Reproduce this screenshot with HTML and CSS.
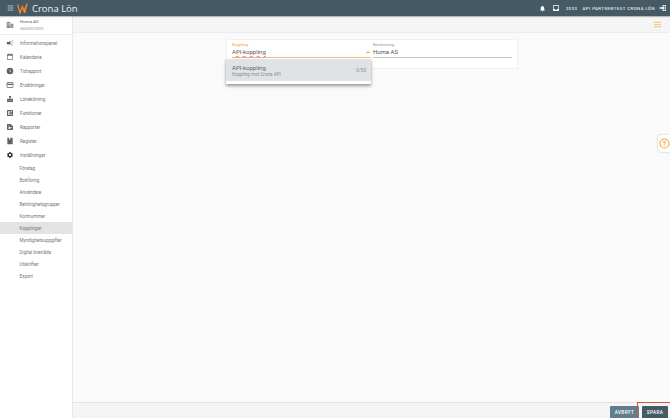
FILE: index.html
```html
<!DOCTYPE html>
<html lang="sv">
<head>
  <meta charset="UTF-8" />
  <title>Crona Lön</title>
  <link rel="stylesheet" href="styles.css">
</head>
<body>
  <header class="topbar">
    <svg class="burger" viewBox="0 0 10 8"><path d="M1 1h8M1 4h8M1 7h8" stroke="#dfe5e8" stroke-width="1"/></svg>
    <svg class="logo" viewBox="0 0 13 11"><path d="M.7 1.5 3 10 5.4 3.5 7 8.5 9 3M10 .5 7.6 10" fill="none" stroke="#f08a24" stroke-width="1.3"/></svg>
    <span class="brand">Crona Lön</span>
    <div class="topbar-right">
      <svg class="top-icon" viewBox="0 0 24 24"><path fill="#fff" d="M12 22a2 2 0 0 0 2-2h-4a2 2 0 0 0 2 2zm6-6v-5c0-3.100-1.600-5.600-4.500-6.300V4a1.500 1.500 0 0 0-3 0v.7C7.600 5.400 6 7.900 6 11v5l-2 2v1h16v-1z"/></svg>
      <svg class="top-icon inbox" viewBox="0 0 24 24"><path fill="#fff" d="M19 3H5a2 2 0 0 0-2 2v14a2 2 0 0 0 2 2h14a2 2 0 0 0 2-2V5a2 2 0 0 0-2-2zm0 12h-4a3 3 0 0 1-6 0H5V5h14z"/></svg>
      <span class="top-text">2023</span>
      <span class="top-text">API PARTNERTEST CRONA LÖN</span>
      <svg class="top-icon exit" viewBox="0 0 24 24"><path fill="#fff" d="M10 17l1.400 1.400L17.800 12l-6.400-6.400L10 7l3 3H2v4h11zM19 3h-9v2h9v14h-9v2h9a2 2 0 0 0 2-2V5a2 2 0 0 0-2-2z"/></svg>
    </div>
  </header>

  <div class="app">
    <nav class="sidebar">
      <div class="company">
        <svg class="nav-icon" viewBox="0 0 24 24"><path fill="#8a8a8a" d="M2 3h11v18H2zM14 8h8v13h-8z"/><path fill="#fff" d="M5 6h2v2H5zM9 6h2v2H9zM5 10h2v2H5zM9 10h2v2H9zM5 14h2v2H5zM9 14h2v2H9zM17 11h2v2h-2zM17 15h2v2h-2z"/></svg>
        <div>
          <div class="company-name">Huma AS</div>
          <div class="company-org">566000-0000</div>
        </div>
      </div>
      <a class="nav-item">
        <svg class="nav-icon" viewBox="0 0 24 24"><path fill="#616161" d="M18 11v2h4v-2zm-2 6.600 3.200 2.400 1.200-1.600-3.200-2.400zM20.400 5.600 19.200 4 16 6.400 17.200 8zM4 9a2 2 0 0 0-2 2v2a2 2 0 0 0 2 2h1v4h2v-4h1l5 3V6L8 9zm11.500 3c0-1.300-.6-2.500-1.500-3.300v6.600c.9-.8 1.500-2 1.500-3.300z"/></svg>
        Informationspanel
      </a>
      <a class="nav-item">
        <svg class="nav-icon" viewBox="0 0 24 24"><path fill="#757575" d="M19 3h-1V1h-2v2H8V1H6v2H5a2 2 0 0 0-2 2v14a2 2 0 0 0 2 2h14a2 2 0 0 0 2-2V5a2 2 0 0 0-2-2zm0 16H5V8h14z"/></svg>
        Kalendarie
      </a>
      <a class="nav-item">
        <svg class="nav-icon" viewBox="0 0 24 24"><path fill="#616161" d="M12 2a10 10 0 1 0 0 20 10 10 0 0 0 0-20zm4.200 14.200L11 13V7h1.500v5.200l4.500 2.700z"/></svg>
        Tidrapport
      </a>
      <a class="nav-item">
        <svg class="nav-icon" viewBox="0 0 24 24"><path fill="#616161" d="M20 4H4a2 2 0 0 0-2 2v12a2 2 0 0 0 2 2h16a2 2 0 0 0 2-2V6a2 2 0 0 0-2-2zm0 14H4v-6h16zm0-10H4V6h16z"/></svg>
        Ersättningar
      </a>
      <a class="nav-item">
        <svg class="nav-icon" viewBox="0 0 24 24"><path fill="#616161" d="M9 3h6v5h-2v3h6a2 2 0 0 1 2 2v4H3v-4a2 2 0 0 1 2-2h6V8H9zM3 18h18v3H3z"/></svg>
        Lönekörning
      </a>
      <a class="nav-item">
        <svg class="nav-icon" viewBox="0 0 24 24"><path fill="#616161" d="M19 3H5a2 2 0 0 0-2 2v14a2 2 0 0 0 2 2h14a2 2 0 0 0 2-2V5a2 2 0 0 0-2-2zM6 7h5v4H6zm0 6h5v4H6zm12 4h-5v-2h5zm0-4h-5v-2h5zm0-4h-5V7h5z"/></svg>
        Funktioner
      </a>
      <a class="nav-item">
        <svg class="nav-icon" viewBox="0 0 24 24"><path fill="#616161" d="M14 3H5a2 2 0 0 0-2 2v14a2 2 0 0 0 2 2h14a2 2 0 0 0 2-2V10zM7 8h5v2H7zm0 4h10v2H7zm0 4h7v2H7z"/></svg>
        Rapporter
      </a>
      <a class="nav-item">
        <svg class="nav-icon" viewBox="0 0 24 24"><path fill="#616161" d="M4 2h5v6l2-1.500L13 8V2h7v20H4z"/></svg>
        Register
      </a>
      <a class="nav-item">
        <svg class="nav-icon" viewBox="0 0 24 24"><path fill="#212121" d="M19.400 13a7.500 7.500 0 0 0 0-2l2.100-1.600-2-3.500-2.500 1a7.500 7.500 0 0 0-1.700-1L15 3.300h-4l-.4 2.600a7.500 7.500 0 0 0-1.700 1l-2.500-1-2 3.500L6.500 11a7.500 7.500 0 0 0 0 2l-2.100 1.600 2 3.500 2.500-1a7.500 7.500 0 0 0 1.700 1l.4 2.600h4l.4-2.600a7.500 7.500 0 0 0 1.700-1l2.500 1 2-3.500zM13 15.500a3.500 3.500 0 1 1 0-7 3.500 3.500 0 0 1 0 7z" transform="translate(-1 0)"/></svg>
        Inställningar
      </a>
      <a class="sub-item">Företag</a>
      <a class="sub-item">Bokföring</a>
      <a class="sub-item">Användare</a>
      <a class="sub-item">Behörighetsgrupper</a>
      <a class="sub-item">Kortnummer</a>
      <a class="sub-item active">Kopplingar</a>
      <a class="sub-item">Myndighetsuppgifter</a>
      <a class="sub-item">Digital brevlåda</a>
      <a class="sub-item">Utskrifter</a>
      <a class="sub-item">Export</a>
    </nav>

    <main class="content">
      <div class="toolbar">
        <svg class="list-icon" viewBox="0 0 8 7"><path d="M0 1h8M0 3.500h8M0 6h8" stroke="#f7c98c" stroke-width="1.400"/></svg>
      </div>
      <div class="page">
        <div class="card">
          <div class="field focused">
            <label>Koppling</label>
            <div class="value"><span class="typed">API-koppling</span><span class="arrow"></span></div>
          </div>
          <div class="field">
            <label>Benämning</label>
            <div class="value">Huma AS</div>
          </div>
          <div class="dropdown">
            <div class="option">
              <div>
                <div class="option-title">API-koppling</div>
                <div class="option-sub">Koppling mot Crona API.</div>
              </div>
              <span class="option-count">0/50</span>
            </div>
          </div>
        </div>
      </div>
      <footer class="footer">
        <button class="btn">AVBRYT</button>
        <button class="btn save">SPARA</button>
      </footer>
    </main>
  </div>

  <div class="help-tab">
    <svg viewBox="0 0 24 24"><circle cx="12" cy="12" r="10" fill="none" stroke="#f5a623" stroke-width="2.200"/><text x="12" y="17" text-anchor="middle" class="help-mark">?</text></svg>
  </div>
  <div class="highlight"></div>
</body>
</html>
```

FILE: styles.css
```css
html, body {
  margin: 0;
  height: 100%;
  overflow: hidden;
}
body {
  font-family: Roboto, "Liberation Sans", sans-serif;
  color: #616161;
  background: #fafafa;
  display: flex;
  flex-direction: column;
}
.topbar {
  height: 16px;
  flex: none;
  background: #455a64;
  display: flex;
  align-items: center;
  padding-left: 7px;
  box-shadow: 0 1px 1px rgba(0,0,0,.25);
  position: relative;
  z-index: 2;
}
.burger { width: 7px; height: 6px; margin-right: 3px; }
.logo { width: 13px; height: 11px; margin-right: 2px; }
.brand {
  font-family: "Open Sans", sans-serif;
  font-size: 9.500px;
  color: #eef2f3;
}
.topbar-right {
  margin-left: auto;
  display: flex;
  align-items: center;
}
.top-icon { width: 7px; height: 7px; margin-right: 6px; }
.inbox { width: 8px; height: 8px; }
.exit { width: 8px; height: 8px; margin: 0 0 0 4px; padding-right: 3px; }
.top-text {
  font-size: 4.300px;
  letter-spacing: .45px;
  font-weight: 500;
  color: #e6ebed;
  margin-right: 5px;
}
.top-text + .top-text { margin-right: 0; }

.app {
  flex: 1;
  display: flex;
  min-height: 0;
}
.sidebar {
  width: 73px;
  flex: none;
  box-sizing: border-box;
  background: #fff;
  border-right: 1px solid #e8e8e8;
  font-size: 4.600px;
}
.company {
  height: 18px;
  display: flex;
  align-items: center;
  border-bottom: 1px solid #eee;
  margin-bottom: 1px;
}
.company-name { font-size: 4.400px; color: #616161; }
.company-org { font-size: 4px; color: #9a9a9a; margin-top: 2px; }
.nav-icon { width: 8px; height: 8px; margin: 0 6px 0 6px; flex: none; }
.nav-item {
  height: 14px;
  display: flex;
  align-items: center;
  color: #757575;
}
.sub-item {
  height: 12px;
  display: flex;
  align-items: center;
  padding-left: 19.500px;
  color: #757575;
}
.sub-item:first-of-type { margin-top: 0; }
.sub-item.active { background: #e3e3e3; }
.nav-item + .sub-item { margin-top: 0; }

.content {
  flex: 1;
  display: flex;
  flex-direction: column;
  min-width: 0;
}
.toolbar {
  height: 17px;
  flex: none;
  box-sizing: border-box;
  background: #f5f5f5;
  border-bottom: 1px solid #ececec;
  display: flex;
  align-items: center;
  justify-content: flex-end;
  padding-right: 9px;
}
.list-icon { width: 7px; height: 7px; }
.page {
  flex: 1;
  padding: 6px 0 0 153px;
}
.card {
  width: 292px;
  height: 30px;
  box-sizing: border-box;
  background: #fff;
  border: 1px solid #f0f0f0;
  padding: 2px 5px 0 5px;
  display: flex;
  gap: 2px;
  position: relative;
}
.field {
  flex: 1;
  height: 15px;
  border-bottom: 1px solid #c8c8c8;
}
.field label {
  display: block;
  font-size: 4.200px;
  color: #9a9a9a;
  line-height: 5px;
}
.field .value {
  font-size: 6px;
  line-height: 9px;
  color: #555;
  display: flex;
  align-items: center;
  justify-content: space-between;
}
.field.focused { border-bottom: 1px solid #f5c07a; }
.field.focused label { color: #f5a623; }
.arrow {
  width: 0;
  height: 0;
  border-left: 2px solid transparent;
  border-right: 2px solid transparent;
  border-bottom: 2px solid #f5a623;
  margin-right: 1px;
}
.typed {
  text-decoration: underline wavy #e57373 .3px;
}
.dropdown {
  position: absolute;
  left: -1px;
  top: 18px;
  width: 145px;
  height: 26px;
  box-sizing: border-box;
  padding-top: 1px;
  background: #fff;
  box-shadow: 0 2px 3px rgba(0,0,0,.4);
}
.option {
  height: 22px;
  background: #e0e3e6;
  display: flex;
  align-items: center;
  justify-content: space-between;
  padding: 0 5px 0 6px;
}
.option-title { font-size: 6px; color: #616161; }
.option-sub { font-size: 4.600px; color: #8d8d8d; margin-top: 1px; }
.option-count { font-size: 4.600px; color: #8d8d8d; }

.footer {
  height: 16px;
  flex: none;
  box-sizing: border-box;
  background: #f5f5f5;
  border-top: 1px solid #e4e4e4;
  display: flex;
  justify-content: flex-end;
  align-items: flex-end;
  gap: 3px;
  padding-right: 2px;
}
.btn {
  height: 12px;
  width: 29px;
  padding: 0;
  border: 0;
  border-radius: 1px 1px 0 0;
  background: #5f7f8c;
  color: #fff;
  font-family: Roboto, "Liberation Sans", sans-serif;
  font-size: 4.600px;
  font-weight: 500;
  letter-spacing: .4px;
}
.btn.save { width: 26px; background: #455a64; }

.help-tab {
  position: absolute;
  right: 0;
  top: 135px;
  width: 12px;
  height: 17px;
  background: #fff;
  border-radius: 3px 0 0 3px;
  box-shadow: 0 0 2px rgba(0,0,0,.3);
  display: flex;
  align-items: center;
  padding-left: 1px;
  box-sizing: border-box;
}
.help-tab svg { width: 11px; height: 11px; flex: none; }
.help-mark {
  font-family: Roboto, sans-serif;
  font-size: 15px;
  font-weight: 700;
  fill: #f5a623;
}
.highlight {
  position: absolute;
  left: 637px;
  top: 402px;
  width: 33px;
  height: 16px;
  box-sizing: border-box;
  border: 1px solid #d9543f;
  border-bottom: 0;
  border-right: 0;
}
```
